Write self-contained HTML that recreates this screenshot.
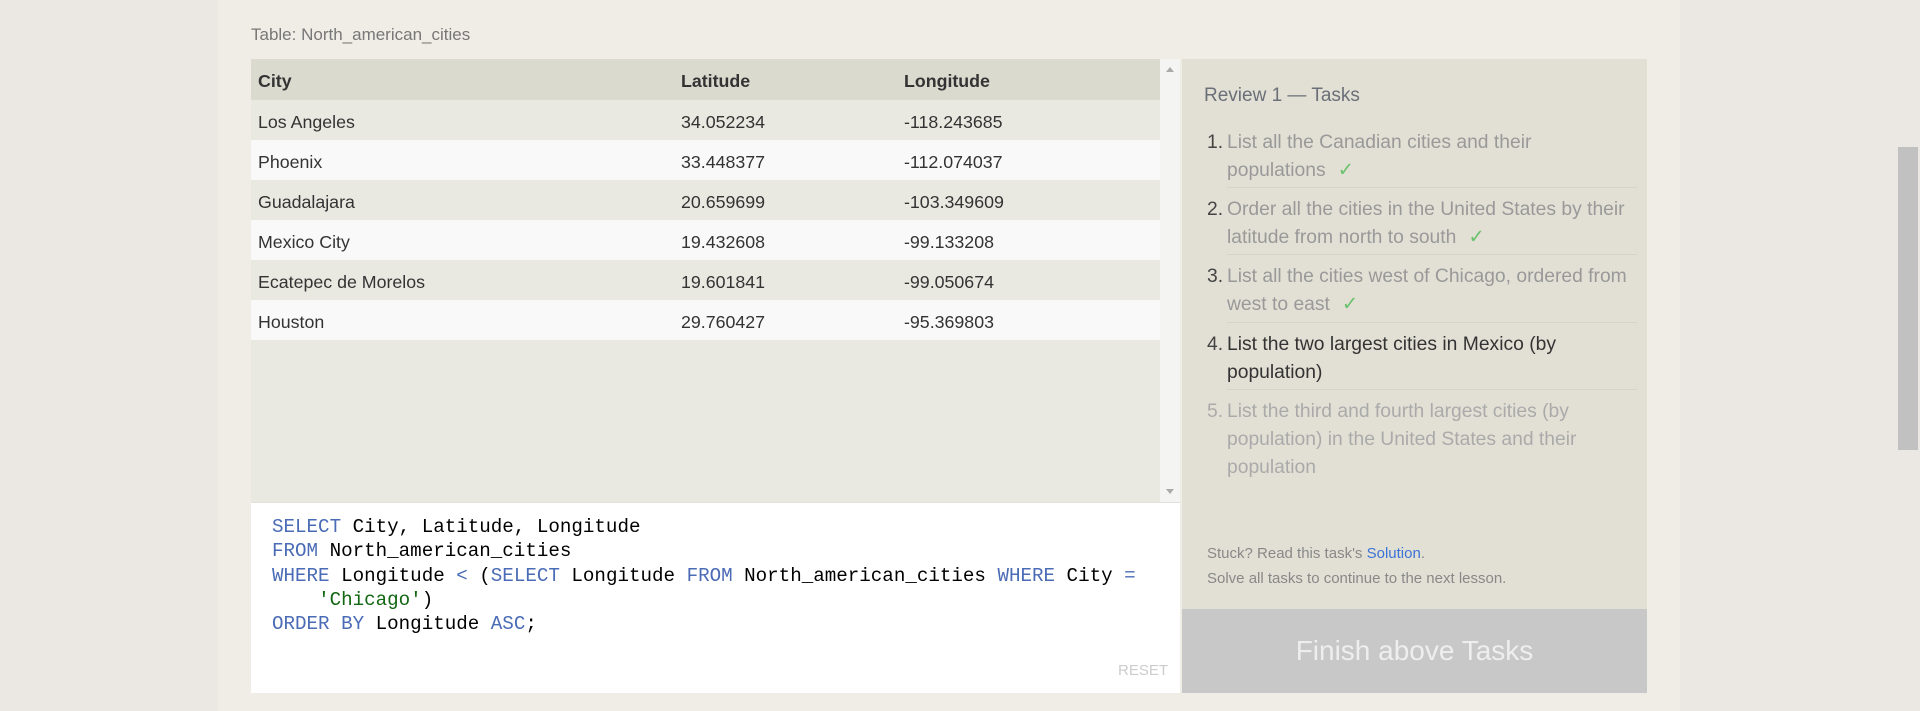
<!DOCTYPE html>
<html><head><meta charset="utf-8"><style>
*{margin:0;padding:0;box-sizing:border-box}
body{width:1920px;height:711px;background:#ebe8e4;font-family:"Liberation Sans",sans-serif;position:relative;overflow:hidden}
.card{position:absolute;left:218px;top:0;width:1462px;height:711px;background:#f0ede6}
.abs{position:absolute}
.lbl{left:251px;top:25px;font-size:17px;color:#777}
.tbl{left:251px;top:59px;width:909px;height:443px;background:#eae9e1}
.row{position:absolute;left:0;width:909px;height:40px;font-size:17.8px;color:#333;line-height:44px}
.row span{position:absolute}
.c1{left:7px}.c2{left:430px}.c3{left:653px}
.sb{left:1160px;top:59px;width:20px;height:443px;background:#f4f4f2}
.ed{left:251px;top:502px;width:929px;height:191px;background:#fff;border-top:1px solid #e2e2da}
pre{position:absolute;left:21px;top:12px;font-family:"Liberation Mono",monospace;font-size:19.2px;line-height:24.3px;color:#000}
.k{color:#4a6bb5}.s{color:#116611}
.rp{left:1182px;top:59px;width:465px;height:550px;background:#e2e0d5}
.btn{left:1182px;top:609px;width:465px;height:84px;background:#c8c8c8;color:#eee;font-size:28px;text-align:center;line-height:84px}
.task{position:absolute;left:45px;width:412px;font-size:19.3px;line-height:28px;color:#999}
.task b{position:absolute;left:-20px;font-weight:normal;color:#444}
.hr{position:absolute;left:45px;width:410px;height:1px;background:#d6d4c9}
.ck{color:#6cc26c;margin-left:12px}
</style></head><body>
<div class="card"></div>
<div class="abs lbl">Table: North_american_cities</div>
<div class="abs tbl">
<div class="row" style="top:0;height:41px;background:#dadacf;font-weight:bold"><span class="c1">City</span><span class="c2">Latitude</span><span class="c3">Longitude</span></div>
<div class="row" style="top:41px;background:#eae9e1"><span class="c1">Los Angeles</span><span class="c2">34.052234</span><span class="c3">-118.243685</span></div>
<div class="row" style="top:81px;background:#f9f9f9"><span class="c1">Phoenix</span><span class="c2">33.448377</span><span class="c3">-112.074037</span></div>
<div class="row" style="top:121px;background:#eae9e1"><span class="c1">Guadalajara</span><span class="c2">20.659699</span><span class="c3">-103.349609</span></div>
<div class="row" style="top:161px;background:#f9f9f9"><span class="c1">Mexico City</span><span class="c2">19.432608</span><span class="c3">-99.133208</span></div>
<div class="row" style="top:201px;background:#eae9e1"><span class="c1">Ecatepec de Morelos</span><span class="c2">19.601841</span><span class="c3">-99.050674</span></div>
<div class="row" style="top:241px;background:#f9f9f9"><span class="c1">Houston</span><span class="c2">29.760427</span><span class="c3">-95.369803</span></div>
</div>
<div class="abs sb"><div style="position:absolute;left:6px;top:8px;border:4px solid transparent;border-bottom:5px solid #aaa;border-top:0"></div><div style="position:absolute;left:6px;bottom:8px;border:4px solid transparent;border-top:5px solid #aaa;border-bottom:0"></div></div>
<div class="abs ed"><pre><span class="k">SELECT</span> City, Latitude, Longitude
<span class="k">FROM</span> North_american_cities
<span class="k">WHERE</span> Longitude <span class="k">&lt;</span> (<span class="k">SELECT</span> Longitude <span class="k">FROM</span> North_american_cities <span class="k">WHERE</span> City <span class="k">=</span>
    <span class="s">'Chicago'</span>)
<span class="k">ORDER BY</span> Longitude <span class="k">ASC</span>;</pre>
<div style="position:absolute;left:867px;top:159px;font-size:15px;color:#ccc">RESET</div></div>
<div class="abs rp">
<div style="position:absolute;left:22px;top:26px;font-size:19px;color:#6a6f78">Review 1 — Tasks</div>
<div class="task" style="top:70px"><b>1.</b>List all the Canadian cities and their populations<span class="ck">✓</span></div>
<div class="hr" style="top:128px"></div>
<div class="task" style="top:137px"><b>2.</b>Order all the cities in the United States by their latitude from north to south<span class="ck">✓</span></div>
<div class="hr" style="top:195px"></div>
<div class="task" style="top:204px"><b>3.</b>List all the cities west of Chicago, ordered from west to east<span class="ck">✓</span></div>
<div class="hr" style="top:263px"></div>
<div class="task" style="top:272px;color:#333"><b>4.</b>List the two largest cities in Mexico (by population)</div>
<div class="hr" style="top:330px"></div>
<div class="task" style="top:339px;color:#aaa"><b style="color:#aaa">5.</b>List the third and fourth largest cities (by population) in the United States and their population</div>
<div style="position:absolute;left:25px;top:482px;font-size:15px;line-height:25px;color:#888">Stuck? Read this task's <span style="color:#3b73d6">Solution</span>.<br>Solve all tasks to continue to the next lesson.</div>
</div>
<div class="abs btn">Finish above Tasks</div>
<div class="abs" style="left:1898px;top:147px;width:20px;height:303px;background:#c1c1c1"></div>
</body></html>
